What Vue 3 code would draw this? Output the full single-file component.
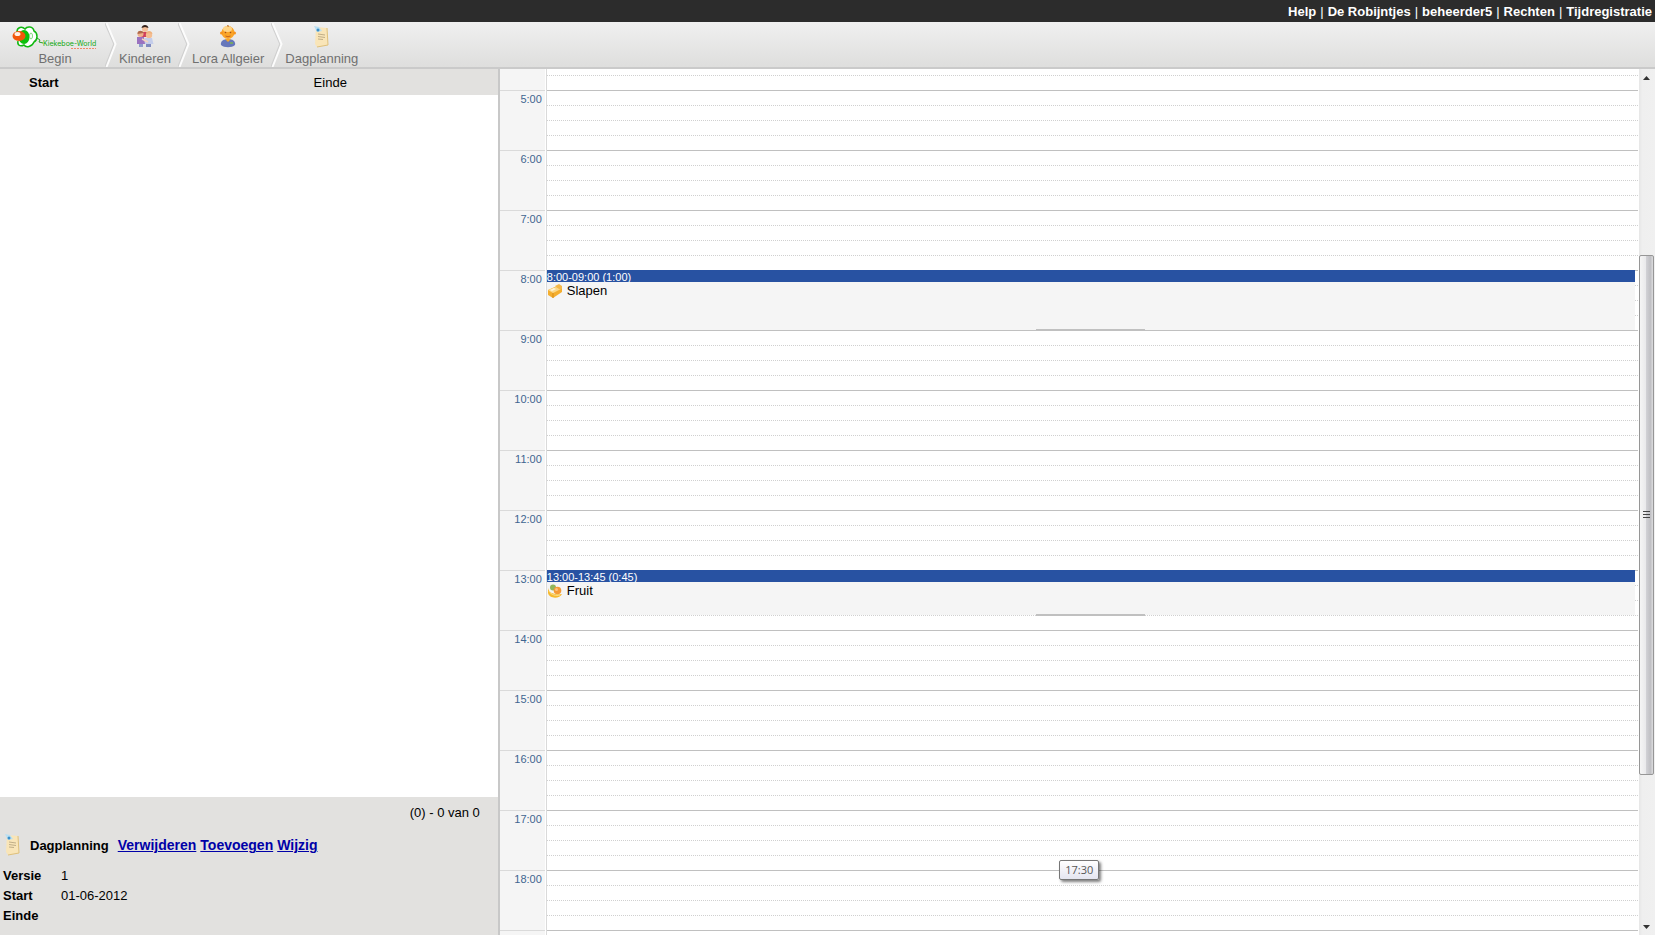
<script setup>
import { ref, onMounted } from 'vue'

const menu = ['Help', 'De Robijntjes', 'beheerder5', 'Rechten', 'Tijdregistratie']
const crumbs = [
  { icon: 'logo', label: 'Begin' },
  { icon: 'kids', label: 'Kinderen' },
  { icon: 'child', label: 'Lora Allgeier' },
  { icon: 'plan', label: 'Dagplanning' },
]
const actions = ['Verwijderen', 'Toevoegen', 'Wijzig']
const details = [
  { name: 'Versie', value: '1' },
  { name: 'Start', value: '01-06-2012' },
  { name: 'Einde', value: '' },
]

// the first and the last hour run without a label
const firstHour = 4
const lastHour = 19
const hours = Array.from({ length: lastHour - firstHour + 1 }, (_, i) => firstHour + i)
const hourLabel = (h) => (h > firstHour && h < lastHour ? h + ':00' : '')

const events = [
  { from: 8, length: 1, time: '8:00-09:00 (1:00)', title: 'Slapen', icon: 'bed' },
  { from: 13, length: 0.75, time: '13:00-13:45 (0:45)', title: 'Fruit', icon: 'fruit' },
]
const hourHeight = 60
const eventStyle = (e) => ({
  top: (e.from - firstHour) * hourHeight + 'px',
  height: e.length * hourHeight + 'px',
})

// open the day a bit before 5:00
const calendar = ref(null)
onMounted(() => {
  calendar.value.scrollTop = hourHeight - 21
})
</script>

<template>
  <div class="page">
    <nav class="topbar">
      <template v-for="(item, i) in menu" :key="item">
        <span v-if="i > 0" class="sep">|</span>
        <a href="#">{{ item }}</a>
      </template>
    </nav>

    <nav class="crumbs">
      <template v-for="(crumb, i) in crumbs" :key="crumb.label">
        <svg v-if="i > 0" class="arrow" width="12" height="44" viewBox="0 0 12 44">
          <path d="M0 0L9 21L0 44" fill="none" stroke="#d0d0d0" stroke-width="1.5" />
          <path d="M1.5 0L10.5 21L1.5 44" fill="none" stroke="#fcfcfc" stroke-width="2" />
        </svg>
        <a href="#" class="crumb" :class="crumb.icon">
          <svg v-if="crumb.icon === 'logo'" width="86" height="24" viewBox="0 0 86 24">
            <path d="M5 7C5 2 10 1 13 4C15 1 21 1 22 6C26 8 26 15 22 17C20 22 14 23 12 20C8 22 5 20 6 16" fill="#fff" stroke="#10b810" stroke-width="1.5" />
            <ellipse cx="12" cy="12" rx="5.5" ry="7" fill="#0cc00c" />
            <ellipse cx="19" cy="11" rx="1.5" ry="3" fill="none" stroke="#7fd87f" />
            <ellipse cx="7" cy="11" rx="6.5" ry="5" fill="#f2560a" />
            <ellipse cx="5.5" cy="9" rx="3" ry="2" fill="#fff0e4" />
            <path d="M25 13L28 15L27 17L31 18" fill="none" stroke="#22a522" />
            <text x="31" y="21" class="brand">Kiekeboe-World</text>
            <path d="M59 23.5H84" stroke="#f08a68" stroke-dasharray="2 1" />
          </svg>
          <svg v-else-if="crumb.icon === 'kids'" width="18" height="24" viewBox="0 0 18 24">
            <circle cx="9" cy="4" r="3" fill="#f4c09a" />
            <path d="M5.5 3C6 -1 12 -1 12.5 3L9 2Z" fill="#33201a" />
            <path d="M4 7H13L12 12H5Z" fill="#d0405c" />
            <circle cx="4.5" cy="9" r="3" fill="#eeb08b" />
            <path d="M1.5 9C1 5 7 5 7.5 8Z" fill="#b0694a" />
            <circle cx="13" cy="10" r="3.2" fill="#f4bd91" />
            <path d="M10 9C10 5 16 5 16.5 9L13 8Z" fill="#efb27c" />
            <path d="M1 12H8L9 19H1Z" fill="#9a72c0" />
            <path d="M9 13H16L17.5 19H9Z" fill="#c4cdea" />
            <path d="M3 19H7V22H3Z" fill="#8f9dcc" />
            <path d="M10 19H15V22H10Z" fill="#7f8abf" />
            <path d="M6 14L12 17" stroke="#f6d3bc" stroke-width="1.5" />
          </svg>
          <svg v-else-if="crumb.icon === 'child'" width="18" height="24" viewBox="0 0 18 24">
            <path d="M2 20C1 16 5 14 9 14C13 14 17 16 16 20C13 23 5 23 2 20Z" fill="#6677bb" />
            <path d="M6 14L9 17L12 14Z" fill="#f6a72a" />
            <circle cx="9" cy="7.5" r="6.5" fill="#faa528" />
            <circle cx="2.5" cy="8" r="1.5" fill="#f6941e" />
            <circle cx="15.5" cy="8" r="1.5" fill="#f6941e" />
            <ellipse cx="8.5" cy="4" rx="4.5" ry="3" fill="#fdd487" />
            <circle cx="6.5" cy="7.5" r="0.8" fill="#a34d18" />
            <circle cx="11.5" cy="7.5" r="0.8" fill="#a34d18" />
            <path d="M6.5 11Q9 12.5 11.5 11" fill="none" stroke="#c8651c" />
            <path d="M8 0Q10 0 9 2" fill="none" stroke="#b66a28" />
            <path d="M11 17H14V19H11Z" fill="#76a569" />
          </svg>
          <svg v-else width="16" height="24" viewBox="0 0 16 24">
            <path d="M2 2L13 3L14 20L3 22L1 19Z" fill="#f9e5b8" />
            <path d="M13 3L14 20L3 22" fill="none" stroke="#dfc07a" />
            <path d="M4 9L11 10M4 11.5L11 12.5M4 14L9 14.5" stroke="#c0ae88" />
            <path d="M0 1L5 2L8 6L3 7Z" fill="#b9dff2" />
            <circle cx="4" cy="5" r="1.5" fill="#3a8fca" />
          </svg>
          <span>{{ crumb.label }}</span>
        </a>
      </template>
    </nav>

    <main>
      <section class="side">
        <table class="list">
          <thead>
            <tr>
              <th class="sorted">Start</th>
              <th>Einde</th>
            </tr>
          </thead>
        </table>
        <footer>
          <p class="count">(0) - 0 van 0</p>
          <div class="actions">
            <svg width="16" height="24" viewBox="0 0 16 24">
              <path d="M2 2L13 3L14 20L3 22L1 19Z" fill="#f9e5b8" />
              <path d="M13 3L14 20L3 22" fill="none" stroke="#dfc07a" />
              <path d="M4 9L11 10M4 11.5L11 12.5M4 14L9 14.5" stroke="#c0ae88" />
              <path d="M0 1L5 2L8 6L3 7Z" fill="#b9dff2" />
              <circle cx="4" cy="5" r="1.5" fill="#3a8fca" />
            </svg>
            <b>Dagplanning</b>
            <a v-for="action in actions" :key="action" href="#">{{ action }}</a>
          </div>
          <table class="details">
            <tbody>
              <tr v-for="d in details" :key="d.name">
                <th>{{ d.name }}</th>
                <td>{{ d.value }}</td>
              </tr>
            </tbody>
          </table>
        </footer>
      </section>

      <section class="calendar" ref="calendar">
        <div class="hours">
          <div v-for="h in hours" :key="h" class="hour">{{ hourLabel(h) }}</div>
        </div>
        <div class="day">
          <div v-for="h in hours" :key="h" class="slots">
            <div v-for="q in 4" :key="q" class="slot"></div>
          </div>
          <article v-for="e in events" :key="e.title" class="event" :style="eventStyle(e)">
            <div class="time">{{ e.time }}</div>
            <div class="title">
              <svg v-if="e.icon === 'bed'" width="14" height="14" viewBox="0 0 14 14">
                <path d="M0 6L9 2L14 3V8L5 14L0 11Z" fill="#f4ae2e" />
                <path d="M0 6L8 3L13 5L5 9Z" fill="#fbd88a" />
                <path d="M7 2L11 0L14 2V5L11 5Z" fill="#f5b849" />
                <path d="M2 6L6 4L8 5L4 7Z" fill="#fff5d8" />
                <path d="M5 9V14" stroke="#d98b16" />
              </svg>
              <svg v-else width="14" height="14" viewBox="0 0 14 14">
                <circle cx="5" cy="3.5" r="3" fill="#92b65c" />
                <circle cx="9.5" cy="6.5" r="3.8" fill="#f59a36" />
                <path d="M0 4C1 9 6 11 14 10C12 15 1 15 0 9Z" fill="#f6b92e" />
                <path d="M1 7C3 11 8 12 12 11" fill="none" stroke="#fde391" />
                <circle cx="8.5" cy="5.5" r="1.5" fill="#fcc27e" />
              </svg>
              <span>{{ e.title }}</span>
            </div>
            <div class="resizer"></div>
          </article>
        </div>
      </section>

      <div class="scrollbar">
        <button class="step" aria-label="Omhoog">
          <svg width="7" height="4" viewBox="0 0 7 4"><path d="M0 4L3.5 0L7 4Z" fill="#333" /></svg>
        </button>
        <div class="before"></div>
        <div class="thumb"><i></i><i></i><i></i></div>
        <div class="after"></div>
        <button class="step" aria-label="Omlaag">
          <svg width="7" height="4" viewBox="0 0 7 4"><path d="M0 0L3.5 4L7 0Z" fill="#333" /></svg>
        </button>
      </div>

      <div class="tooltip">17:30</div>
    </main>
  </div>
</template>

<style>
body {
  margin: 0;
}
</style>

<style scoped>
.page {
  display: flex;
  flex-direction: column;
  height: 100vh;
  overflow: hidden;
  font-family: "Liberation Sans", Arial, sans-serif;
  font-size: 13px;
  color: #000;
}

.topbar {
  display: flex;
  justify-content: flex-end;
  gap: 4px;
  height: 22px;
  padding-right: 3px;
  line-height: 23px;
  background: #2c2c2c;
  color: #fff;
}

.topbar a {
  color: #fff;
  font-weight: bold;
  text-decoration: none;
}

.crumbs {
  display: flex;
  height: 45px;
  border-bottom: 2px solid #cacaca;
  background: linear-gradient(#f0f0f0, #dededd);
}

.crumb {
  display: flex;
  flex-direction: column;
  align-items: center;
  padding: 3px 7px 0 2px;
  color: #707070;
  text-decoration: none;
}

.crumb svg {
  flex-shrink: 0;
}

.crumb span {
  line-height: 20px;
}

.crumb.logo {
  padding-left: 12px;
}

.brand {
  font-family: Inter, sans-serif;
  font-size: 7px;
  fill: #12a812;
}

.arrow {
  padding-top: 1px;
}

main {
  position: relative;
  display: flex;
  flex: 1;
  min-height: 0;
}

.side {
  display: flex;
  flex-direction: column;
  justify-content: space-between;
  box-sizing: border-box;
  width: 30.2%;
  border-right: 2px solid #c8c8c8;
}

.list {
  width: 100%;
  border-collapse: collapse;
  background: #e2e1df;
}

.list th {
  box-sizing: border-box;
  width: 37%;
  height: 26px;
  padding: 0;
  font-weight: normal;
  text-align: left;
}

.list .sorted {
  width: 63%;
  padding-left: 29px;
  font-weight: bold;
}

footer {
  height: 138px;
  background: #e2e1df;
}

.count {
  margin: 0;
  padding: 8px 18px 8px 0;
  line-height: 16px;
  text-align: right;
}

.actions {
  display: flex;
  align-items: center;
  gap: 4px;
  height: 32px;
  padding-left: 5px;
  font-weight: bold;
}

.actions b {
  padding: 0 5px;
}

.actions a {
  color: #0000a8;
  font-size: 14px;
  text-decoration-thickness: 1px;
}

.details {
  margin-top: 4px;
  border-collapse: collapse;
}

.details th {
  width: 58px;
  height: 20px;
  padding: 0 0 0 3px;
  text-align: left;
}

.details td {
  padding: 0;
}

.calendar {
  display: flex;
  flex: 1;
  align-items: flex-start;
  overflow: hidden;
}

.hours {
  width: 45px;
  border-right: 1px solid #fff;
  background: #f5f5f5;
}

.hour {
  box-sizing: border-box;
  height: 60px;
  padding: 1px 3px 0 0;
  border-top: 1px solid #dadada;
  color: #3f6590;
  font-size: 11px;
  line-height: 14px;
  text-align: right;
}

.day {
  position: relative;
  flex: 1;
  border-left: 1px solid #dadada;
}

.slot {
  box-sizing: border-box;
  height: 15px;
  border-top: 1px dotted #d0d0d0;
}

.slot:first-child {
  border-top: 1px solid #c0c0c0;
}

/* an event covers its hours in the day column */
.event {
  position: absolute;
  left: 0;
  right: 3px;
  display: flex;
  flex-direction: column;
  background: #f5f5f5;
}

.time {
  height: 12px;
  overflow: hidden;
  background: #2852a2;
  color: #fff;
  font-size: 11px;
  line-height: 15px;
}

.title {
  display: flex;
  align-items: center;
  gap: 5px;
  flex: 1;
  max-height: 17px;
  padding-left: 1px;
}

.resizer {
  width: 10%;
  height: 2px;
  margin: auto auto -1px;
  background: #c0c0c0;
}

.scrollbar {
  display: flex;
  flex-direction: column;
  width: 15px;
  margin-left: 1px;
  padding-right: 1px;
  background: linear-gradient(90deg, #e6e6e6, #efefef 20%, #f0f0f0);
}

.step {
  display: flex;
  align-items: center;
  justify-content: center;
  height: 17px;
  padding: 0;
  border: none;
  background: none;
}

.before {
  flex: 169;
}

.after {
  flex: 143;
}

.thumb {
  display: flex;
  flex: 520;
  flex-direction: column;
  align-items: center;
  justify-content: center;
  gap: 2px;
  box-sizing: border-box;
  border: 1px solid #969696;
  border-radius: 2px;
  background: linear-gradient(90deg, #f5f5f5, #e9e9eb 45%, #d0d0d4 50%, #c0c0c4 80%, #dcdcde);
}

.thumb i {
  width: 7px;
  height: 1px;
  background: #444;
}

.tooltip {
  position: absolute;
  left: 64%;
  bottom: 55px;
  padding: 0 5px;
  border: 1px solid #767676;
  border-radius: 2px;
  background: linear-gradient(#fff, #e4e5f0);
  box-shadow: 2px 2px 3px rgba(0, 0, 0, 0.5);
  color: #575757;
  font-family: "Open Sans", sans-serif;
  font-size: 11px;
  line-height: 18px;
}
</style>
